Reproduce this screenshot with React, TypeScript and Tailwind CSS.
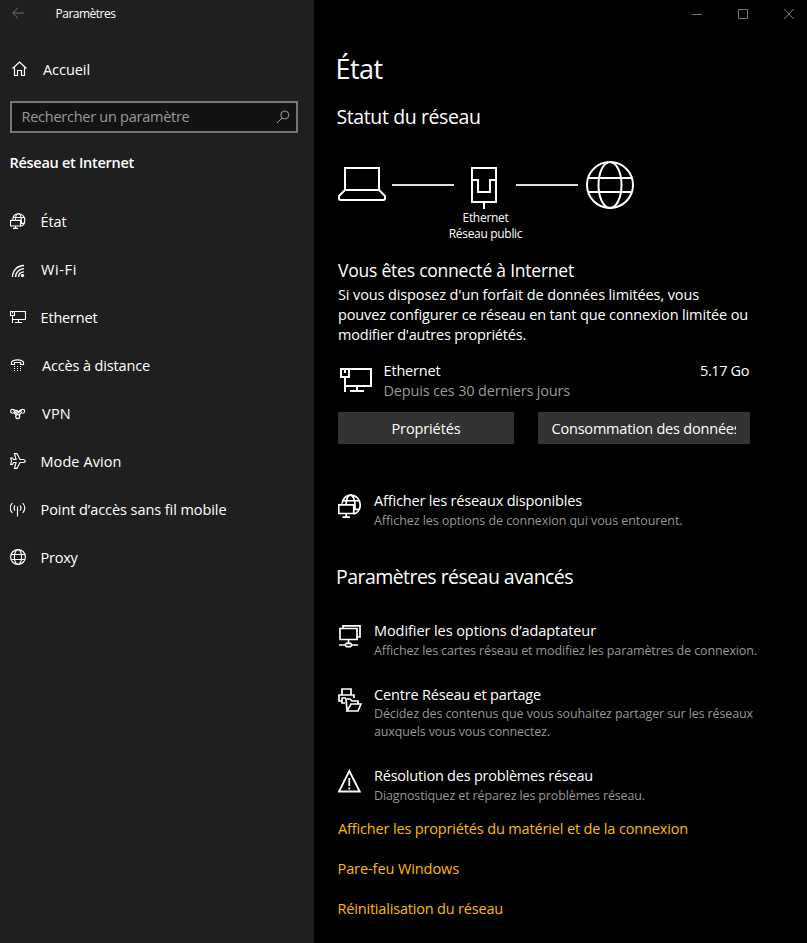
import { useLayoutEffect, useRef, useState } from "react";
import type { ReactNode } from "react";

/** One line of text, tracked so that it fills the given width. */
function Line({ w, className = "", children }: { w: number; className?: string; children: string }) {
  const ref = useRef<HTMLSpanElement>(null);
  const [spacing, setSpacing] = useState(0);
  useLayoutEffect(() => {
    if (ref.current) {
      const natural = ref.current.getBoundingClientRect().width;
      setSpacing((w - natural) / children.length);
    }
  }, []);
  return (
    <span className={`block whitespace-nowrap ${className}`}>
      <span ref={ref} className="inline-block" style={{ letterSpacing: spacing }}>
        {children}
      </span>
    </span>
  );
}

function Svg({ w, h, className = "", sw = 1, children }: { w: number; h: number; className?: string; sw?: number; children: ReactNode }) {
  return (
    <svg width={w} height={h} viewBox={`0 0 ${w} ${h}`} fill="none" stroke="currentColor" strokeWidth={sw} className={`shrink-0 ${className}`}>
      {children}
    </svg>
  );
}

const GlobeMonitor = () => (
  <>
    <path d="M2.7 6.5C3.2 3 5.5 .7 8.2 .7C12.2 .7 14.8 3.8 14.8 7.3C14.8 10.5 12.8 12.8 10.5 13.2" />
    <path d="M5.4 7.2C5.4 3.5 6.6 .7 8.2 .7C10 .7 11.3 3.8 11.3 7.3M2.9 4.5H14M10.5 10.3H14M11.3 7V10" />
    <path d="M.5 7.3H10.5V13H.5ZM5.5 13V15.4M3 15.4H8" />
  </>
);

const icons: Record<string, ReactNode> = {
  status: <GlobeMonitor />,
  wifi: (
    <>
      <path d="M2.5 15C2.5 8.5 7 3.8 14 3.5M5.6 15C5.6 10.4 9 7 14 6.7M8.6 15C8.6 12 10.8 10 14 9.9" strokeWidth="1.3" />
      <circle cx="12.5" cy="13.4" r="1.7" fill="currentColor" stroke="none" />
    </>
  ),
  ethernet: <path d="M4.5 1.5H15.5V9.5H2.5M.5 1.5H4.5V5.5H.5ZM2.5 5.5V13M2.5 1.5V3.5M8.5 9.5V12.5M5 12.5H12" />,
  dial: (
    <>
      <path d="M1.5 5.5V4.2C3 1 12 1 13.5 4.2V6.5H10.5V4.5H4.5V6.5H1.5Z" />
      <path d="M4 8.5H5M7 8.5H8M10 8.5H11M4 10.5H5M7 10.5H8M10 10.5H11M7 12.5H8M10 12.5H11M4 12.5H5" />
    </>
  ),
  vpn: (
    <>
      <circle cx="2.5" cy="5.3" r="1.9" />
      <circle cx="12.8" cy="5.3" r="1.9" />
      <circle cx="7.7" cy="10.6" r="2" />
      <path d="M3.8 3.8L8 5.8L11.4 3.8M4 6.8L6.4 9M11.4 6.8L9 9M6 4L9.6 6.8M4.3 5.5L7 7.5L10.8 5" />
    </>
  ),
  plane: <path d="M4.5 .6H7L10 6.5H13.5C15.9 6.8 15.9 9.2 13.5 9.5H10L7 15.4H4.5L6 9.5H3.5L2.5 11.5H.7L1.5 8L.7 5H2.5L3.5 6.5H6Z" />,
  hotspot: <path d="M7.5 5.5V15.5M5 4.3C3.8 6 3.8 8 5 9.7M10 4.3C11.2 6 11.2 8 10 9.7M2.3 2C-.2 5 -.2 9 2.3 12M12.7 2C15.2 5 15.2 9 12.7 12" />,
  proxy: (
    <>
      <circle cx="8" cy="8" r="7.4" />
      <ellipse cx="8" cy="8" rx="3.6" ry="7.4" />
      <path d="M1 5.5H15M1 10.5H15" />
    </>
  ),
};

const nav = [
  { icon: "status", label: "État", w: 26, pad: "pl-[14.5px]", lift: "mb-0.5" },
  { icon: "wifi", label: "Wi-Fi", w: 36, pad: "pl-[15px]", lift: "" },
  { icon: "ethernet", label: "Ethernet", w: 57, pad: "pl-[14.5px]", lift: "" },
  { icon: "dial", label: "Accès à distance", w: 108, pad: "pl-4", lift: "" },
  { icon: "vpn", label: "VPN", w: 29, pad: "pl-4", lift: "" },
  { icon: "plane", label: "Mode Avion", w: 81, pad: "pl-[14.5px]", lift: "mb-0.5" },
  { icon: "hotspot", label: "Point d’accès sans fil mobile", w: 186, pad: "pl-[14.5px]", lift: "mb-0.5" },
  { icon: "proxy", label: "Proxy", w: 37, pad: "pl-[14.5px]", lift: "mb-0.5" },
];

function Sidebar() {
  return (
    <aside className="flex h-full w-[314px] shrink-0 flex-col bg-[#1f1f1f]">
      <div className="flex h-7 items-center pl-3">
        <Svg w={13} h={12} className="mb-0.5 text-[#707070]"><path d="M.7 6H12M6 .7L.7 6L6 11.3" /></Svg>
        <Line w={60} className="ml-[30.5px] text-xs">Paramètres</Line>
      </div>
      <div className="mt-[22px] flex h-10 items-center pl-[11.5px]">
        <Svg w={15} h={16} className="mb-0.5"><path d="M.5 7.5L7.5 1L14.5 7.5M2.5 6V14.5H5.5V9.5H9.5V14.5H12.5V6" strokeWidth="1.2" /></Svg>
        <Line w={47} className="ml-[16.5px]">Accueil</Line>
      </div>
      <div className="mt-[11px] ml-[10px] flex h-8 w-[288px] items-center border-2 border-[#767676] bg-[#131313] pr-[6px] pl-[9.5px] text-[#999]">
        <Line w={168} className="grow">Rechercher un paramètre</Line>
        <Svg w={14} h={14}><circle cx="8.8" cy="5" r="4" /><path d="M6 8L1 13" /></Svg>
      </div>
      <Line w={124.5} className="mt-5 ml-[9.5px] font-semibold">Réseau et Internet</Line>
      <nav className="mt-[25px] flex flex-col">
        {nav.map((n) => (
          <div key={n.label} className="flex h-12 items-center pl-[10px]">
            <Svg w={16} h={16} sw={1.15} className={n.lift}>{icons[n.icon]}</Svg>
            <Line w={n.w} className={n.pad}>{n.label}</Line>
          </div>
        ))}
      </nav>
    </aside>
  );
}

function Diagram() {
  return (
    <div className="flex h-[84px] items-start">
      <Svg w={48} h={50} sw={2}><path d="M7 8H41V30H7ZM7 30L1 36V38.5C1 39.5 1.5 40 3 40H45C46.5 40 47 39.5 47 38.5V36L41 30" /></Svg>
      <div className="mt-6 ml-1.5 h-0.5 w-[62px] bg-[#ddd]" />
      <div className="flex w-[62px] flex-col items-center">
        <Svg w={26} h={50} sw={2} className="mr-0.5"><path d="M1 8H25V42H1ZM1 20H7V32H19V20H25M13 42V49" /></Svg>
        <Line w={46} className="ml-px text-xs leading-4">Ethernet</Line>
        <Line w={73.5} className="ml-px text-xs leading-4">Réseau public</Line>
      </div>
      <div className="mt-6 h-0.5 w-[62px] bg-[#ddd]" />
      <Svg w={48} h={50} sw={2} className="ml-2"><circle cx="24" cy="25" r="23" /><ellipse cx="24" cy="25" rx="11.5" ry="23" /><path d="M2 18H46M2 32H46" /></Svg>
    </div>
  );
}

function Item({ icon, title, w, lines, className, sub = "mt-px -mb-px" }: { icon: ReactNode; title: string; w: number; lines: [string, number][]; className: string; sub?: string }) {
  return (
    <div className={`flex ${className}`}>
      <div className="w-9 shrink-0 pt-[3px]">{icon}</div>
      <div>
        <Line w={w}>{title}</Line>
        <div className={sub}>
          {lines.map(([t, lw]) => (
            <Line key={t} w={lw} className="text-[12.5px] leading-[18px] text-[#969696]">{t}</Line>
          ))}
        </div>
      </div>
    </div>
  );
}

function WindowButtons() {
  return (
    <div className="flex h-[27px] items-center justify-end gap-9 pr-[13px] text-[#777]">
      <Svg w={10} h={10}><path d="M0 5.5H10" /></Svg>
      <Svg w={10} h={10}><path d="M.5 .5H9.5V9.5H.5Z" /></Svg>
      <Svg w={10} h={10}><path d="M0 0L10 10M10 0L0 10" /></Svg>
    </div>
  );
}

export default function App() {
  return (
    <div className="flex h-[943px] w-[807px] overflow-hidden bg-black font-['Open_Sans','Noto_Sans',sans-serif] text-[14.5px] leading-5 text-white">
      <Sidebar />
      <main className="flex grow flex-col">
        <WindowButtons />
        <div className="flex flex-col pl-6">
          <Line w={47} className="-ml-[2.5px] mt-6 text-[27px] leading-9">État</Line>
          <Line w={144} className="-ml-[1.5px] mt-4 text-[19.5px] leading-7">Statut du réseau</Line>
          <div className="mt-[29px]"><Diagram /></div>
          <Line w={236} className="mt-[14px] text-[17.5px] leading-6">Vous êtes connecté à Internet</Line>
          <div className="mt-[3px]">
            <Line w={361}>Si vous disposez d'un forfait de données limitées, vous</Line>
            <Line w={410}>pouvez configurer ce réseau en tant que connexion limitée ou</Line>
            <Line w={188}>modifier d'autres propriétés.</Line>
          </div>
          <div className="mt-4 flex w-[411px]">
            <Svg w={34} h={34} sw={2} className="mt-1"><path d="M12 4H33V21H7M3 4H11V12H3ZM7 12V27M7 4V8M19 21V26M12 26H26" /></Svg>
            <div className="ml-[11.5px] grow">
              <Line w={57}>Ethernet</Line>
              <Line w={186.5} className="text-[#999]">Depuis ces 30 derniers jours</Line>
            </div>
            <Line w={49}>5.17 Go</Line>
          </div>
          <div className="mt-[11px] flex gap-6">
            <button className="flex h-8 w-[176px] items-center justify-center bg-[#333] pt-0.5"><Line w={69}>Propriétés</Line></button>
            <button className="flex h-8 w-[212px] items-center bg-[#333] pt-0.5 pl-[13.5px]">
              <span className="w-[184.5px] overflow-hidden text-left"><Line w={189}>Consommation des données</Line></span>
            </button>
          </div>
          <Item
            className="mt-[47px]"
            icon={<svg width="24" height="24" viewBox="0 0 16 16" fill="none" stroke="currentColor" strokeWidth="1.15"><GlobeMonitor /></svg>}
            title="Afficher les réseaux disponibles" w={208}
            lines={[["Affichez les options de connexion qui vous entourent.", 308.5]]}
          />
          <Line w={237} className="-ml-[2px] mt-[34px] text-[19.5px] leading-7">Paramètres réseau avancés</Line>
          <Item
            className="mt-[30px]"
            icon={<Svg w={24} h={24} sw={1.7}><path d="M5 4V1.8H22V13H19M2 4.5H19V15.5H2ZM10.5 16V19M1 21H7M14 21H20M7 21L8.5 19.3H12.5L14 21L12.5 22.7H8.5Z" /></Svg>}
            title="Modifier les options d’adaptateur" w={222}
            lines={[["Affichez les cartes réseau et modifiez les paramètres de connexion.", 383]]}
          />
          <Item
            className="mt-[26px]"
            sub=""
            icon={<Svg w={24} h={26} sw={1.7}><path d="M4 7V1H13V7M4 13H1V7H16V10M4 10V15H7M3.5 10H8M9 22L8 11H12L14 13H20V16M9 23L13 16H23L20 23Z" /></Svg>}
            title="Centre Réseau et partage" w={167}
            lines={[["Décidez des contenus que vous souhaitez partager sur les réseaux", 379], ["auxquels vous vous connectez.", 176]]}
          />
          <Item
            className="mt-[25px]"
            icon={<Svg w={23} h={24} sw={1.8}><path d="M11.3 2L21.7 22.5H1ZM11.3 9V17M11.3 18.5V20.5" /></Svg>}
            title="Résolution des problèmes réseau" w={219}
            lines={[["Diagnostiquez et réparez les problèmes réseau.", 271]]}
          />
          <div className="mt-[15px] flex flex-col gap-5 text-[#ffb900]">
            <Line w={350}>Afficher les propriétés du matériel et de la connexion</Line>
            <Line w={121.5} className="-ml-[.5px]">Pare-feu Windows</Line>
            <Line w={165.5} className="-ml-[.5px]">Réinitialisation du réseau</Line>
          </div>
        </div>
      </main>
    </div>
  );
}
